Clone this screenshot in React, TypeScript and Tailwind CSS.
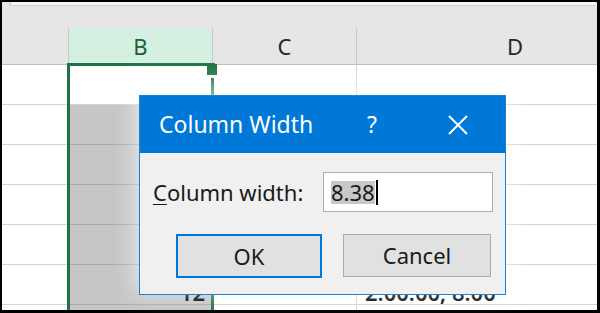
import React from 'react';

const rows = [0, 1, 2, 3, 4, 5, 6];

function CloseIcon() {
  return (
    <svg width="22" height="22" viewBox="0 0 22 22" fill="none">
      <path d="M2 2 L20 20 M20 2 L2 20" stroke="#ffffff" strokeWidth="2" />
    </svg>
  );
}

function Sheet() {
  return (
    <div className="relative flex flex-col h-full">
      {/* formula bar edge */}
      <div className="h-[26px] shrink-0 bg-[#e6e6e6]">
        <div className="ml-[8px] mr-[2px] h-[4px] bg-[#f6f6f6] border-b border-l border-[#cfcfcf]" />
      </div>

      {/* column headers */}
      <div className="flex h-[37px] shrink-0 bg-[#e6e6e6] border-b border-[#bdbdbd] text-[22px] text-[#262626]">
        <div className="w-[67px] shrink-0 border-r border-[#c8c8c8]" />
        <div className="w-[144px] shrink-0 bg-[#d3f0e0] border-r border-[#c8c8c8] flex items-center justify-center text-[#1d5f3c]">
          B
        </div>
        <div className="w-[144px] shrink-0 border-r border-[#c8c8c8] flex items-center justify-center">C</div>
        <div className="w-[316px] shrink-0 flex items-center justify-center">D</div>
      </div>

      {/* cells */}
      {rows.map((r) => (
        <div key={r} className="flex h-[40px] shrink-0 text-[22px] font-semibold text-black">
          <div className="w-[67px] shrink-0 bg-white border-b border-r border-[#d4d4d4]" />
          <div
            className={
              r === 0
                ? 'w-[144px] shrink-0 bg-white border-b border-r border-[#d4d4d4]'
                : 'w-[144px] shrink-0 bg-[#c6c6c6] border-b border-r border-[#a9a9a9] flex items-end justify-end pr-[7px] pb-[1px] leading-none'
            }
          >
            {r === 5 ? '12' : ''}
          </div>
          <div className="w-[144px] shrink-0 bg-white border-b border-r border-[#d4d4d4]" />
          <div className="w-[316px] shrink-0 bg-white border-b border-[#d4d4d4] flex items-end pl-[8px] pb-[1px] leading-none">
            {r === 5 ? '2:00:00; 8:00' : ''}
          </div>
        </div>
      ))}

      {/* selection border on column B */}
      <div className="absolute left-[65px] top-[61px] w-[148px] bottom-0 border-l-[3px] border-t-[3px] border-[#217346]" />
      <div className="absolute left-[209px] top-[76px] w-[3px] bottom-0 bg-[#217346]" />
      <div className="absolute left-[205px] top-[62px] w-[10px] h-[11px] bg-[#217346] border-b-[2px] border-white box-content" />
    </div>
  );
}

function Dialog() {
  return (
    <div className="absolute left-[139px] top-[95px] w-[367px] h-[200px] bg-[#f0f0f0] border border-[#1883d7] shadow-[0_-6px_22px_4px_rgba(255,255,255,0.6)] flex flex-col">
      <div className="h-[57px] shrink-0 bg-[#0078d7] flex items-center text-white text-[23px] pl-[19px] pr-[36px]">
        <span className="flex-1">Column Width</span>
        <span className="mr-[70px]">?</span>
        <CloseIcon />
      </div>
      <div className="flex items-center mt-[19px] pl-[13px] text-[22px] text-[#1a1a1a]">
        <span className="w-[170px]">
          <span className="underline underline-offset-[3px] decoration-1">C</span>olumn width:
        </span>
        <div className="w-[170px] h-[40px] bg-white border border-[#adadad] flex items-center pl-[7px]">
          <span className="bg-[#c8c8c8] leading-[23px]">8.38</span>
          <span className="w-[2px] h-[25px] bg-black ml-[1px]" />
        </div>
      </div>
      <div className="flex mt-[22px] pl-[36px] gap-[21px] text-[22px] text-[#1a1a1a]">
        <div className="w-[146px] h-[44px] bg-[#e1e1e1] border-2 border-[#0078d7] flex items-center justify-center">
          OK
        </div>
        <div className="w-[148px] h-[43px] bg-[#e1e1e1] border border-[#adadad] flex items-center justify-center">
          Cancel
        </div>
      </div>
    </div>
  );
}

export default function App() {
  return (
    <div
      className="relative w-[600px] h-[313px] bg-black pl-[2px] pt-[2px] pr-[3px] pb-[3px] overflow-hidden"
      style={{ fontFamily: '"Noto Sans", "Open Sans", sans-serif' }}
    >
      <div className="w-full h-full overflow-hidden bg-white">
        <Sheet />
      </div>
      <Dialog />
    </div>
  );
}
